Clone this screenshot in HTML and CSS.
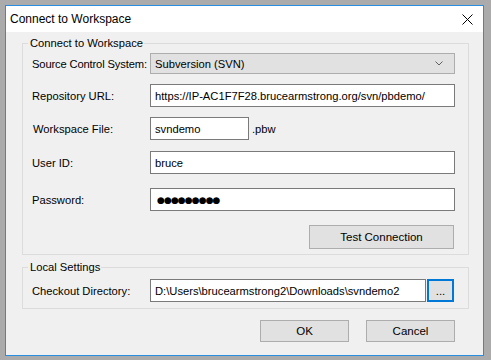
FILE: index.html
```html
<!DOCTYPE html>
<html>
<head>
<meta charset="utf-8">
<link rel="stylesheet" href="styles.css">
</head>
<body>
<div class="window">
  <div class="titlebar">
    <span class="title">Connect to Workspace</span>
    <svg class="close" width="11" height="11" viewBox="0 0 11 11"><path d="M0.5 0.5 L10.5 10.5 M10.5 0.5 L0.5 10.5" stroke="#000" stroke-width="1" fill="none"/></svg>
  </div>
  <div class="content">
    <fieldset class="group group-main">
      <legend>Connect to Workspace</legend>
      <div class="row r-combo">
        <label class="lbl lbl-tight">Source Control System:</label>
        <div class="combo"><span>Subversion (SVN)</span>
          <svg class="chev" width="8" height="5" viewBox="0 0 8 5"><path d="M0.5 0.5 L4 4 L7.5 0.5" stroke="#606060" fill="none" stroke-width="1"/></svg>
        </div>
      </div>
      <div class="row r-url">
        <label class="lbl">Repository URL:</label>
        <div class="field wide">https://IP-AC1F7F28.brucearmstrong.org/svn/pbdemo/</div>
      </div>
      <div class="row r-ws">
        <label class="lbl lbl-ws">Workspace File:</label>
        <div class="field short">svndemo</div>
        <span class="ext">.pbw</span>
      </div>
      <div class="row r-user">
        <label class="lbl">User ID:</label>
        <div class="field wide">bruce</div>
      </div>
      <div class="row r-pass">
        <label class="lbl">Password:</label>
        <div class="field wide dots">●●●●●●●●●</div>
      </div>
      <div class="row r-test">
        <button class="btn btn-test">Test Connection</button>
      </div>
    </fieldset>
    <fieldset class="group group-local">
      <legend>Local Settings</legend>
      <div class="row r-dir">
        <label class="lbl">Checkout Directory:</label>
        <div class="field dir">D:\Users\brucearmstrong2\Downloads\svndemo2</div>
        <button class="btn btn-browse">...</button>
      </div>
    </fieldset>
    <div class="actions">
      <button class="btn btn-ok">OK</button>
      <button class="btn btn-cancel">Cancel</button>
    </div>
  </div>
</div>
</body>
</html>
```
FILE: styles.css
```css
* { box-sizing: border-box; }
html, body { margin: 0; padding: 0; }
body {
  background: #ababab;
  width: 491px;
  height: 360px;
  overflow: hidden;
  font-family: "Liberation Sans", Arial, sans-serif;
  font-size: 11.2px;
  color: #000;
}
.window {
  margin: 5px 0 0 5px;
  width: 479px;
  height: 351px;
  border: 1px solid #2a8ee0;
  background: #f0f0f0;
  display: flex;
  flex-direction: column;
}
.titlebar {
  height: 26px;
  flex: none;
  background: #fff;
  display: flex;
  align-items: center;
  justify-content: space-between;
  padding: 0 10px 0 4px;
}
.title { font-size: 12px; line-height: 16px; }
.close { display: block; }
.content {
  flex: 1;
  padding: 4px 14px 0 16px;
  display: flex;
  flex-direction: column;
}
.group {
  margin: 0;
  border: 1px solid #dcdcdc;
  padding: 0 12px 0 9px;
  min-width: 0;
}
.group legend {
  padding: 0 1px 0 2px;
  margin-left: -4px;
  line-height: 14px;
  height: 14px;
  font-size: 11.2px;
}
.row {
  display: flex;
  align-items: center;
}
.lbl {
  width: 118px;
  flex: none;
  white-space: nowrap;
}
.lbl-tight { letter-spacing: -0.15px; }
.lbl-ws { padding-left: 1px; }
.combo {
  width: 305px;
  height: 21px;
  background: #e1e1e1;
  border: 1px solid #adadad;
  display: flex;
  align-items: center;
  justify-content: space-between;
  padding: 0 11px 0 4px;
}
.chev { display: block; }
.field {
  height: 23px;
  background: #fff;
  border: 1px solid #7a7a7a;
  padding: 0 4px;
  display: flex;
  align-items: center;
  white-space: nowrap;
  overflow: hidden;
}
.wide { width: 305px; }
.short { width: 99px; }
.ext { margin-left: 3px; }
.dots { font-family: "DejaVu Sans", sans-serif; font-size: 9px; letter-spacing: -0.9px; padding-left: 6px; }
.r-combo { margin-top: 3px; }
.r-url { margin-top: 10px; }
.r-ws { margin-top: 10px; }
.r-user { margin-top: 11px; }
.r-pass { margin-top: 14px; }
.r-test { margin-top: 14px; justify-content: flex-end; padding-right: 2px; margin-bottom: 5px; }
.btn {
  font-family: inherit;
  font-size: 11.5px;
  color: #000;
  background: #e1e1e1;
  border: 1px solid #adadad;
  margin: 0;
  padding: 0;
}
.btn-test { width: 145px; height: 24px; }
.group-local { margin-top: 5px; }
.r-dir { margin-top: 5px; margin-bottom: 6px; }
.dir { width: 276px; }
.btn-browse {
  width: 27px;
  height: 23px;
  margin-left: 1px;
  border: 2px solid #0078d7;
  line-height: 12px;
}
.actions {
  display: flex;
  justify-content: flex-end;
  gap: 17px;
  margin-top: 11px;
  padding-right: 14px;
}
.btn-ok, .btn-cancel { width: 89px; height: 22px; }
```
